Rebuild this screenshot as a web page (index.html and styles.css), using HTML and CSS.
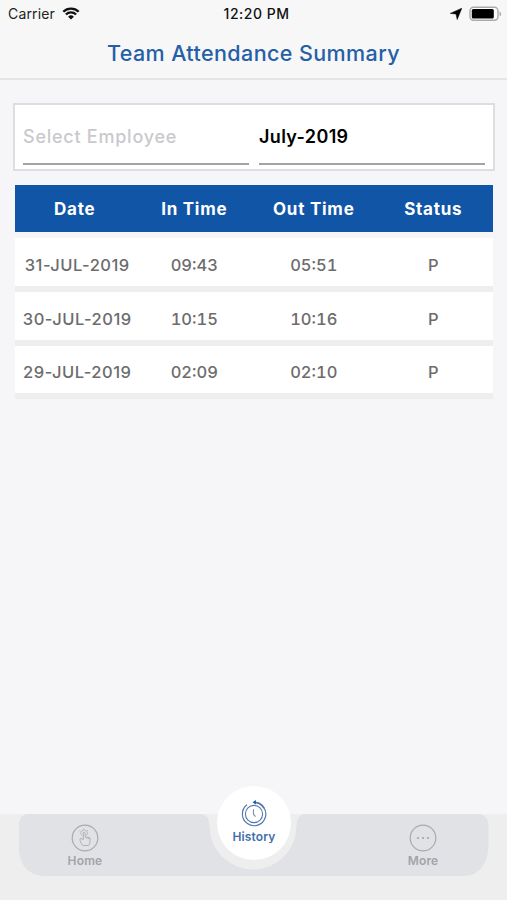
FILE: index.html
```html
<!DOCTYPE html>
<html lang="en">
<head>
    <meta charset="UTF-8">
    <meta name="viewport" content="width=device-width, initial-scale=1.0">
    <title>Team Attendance Summary</title>
    <link rel="stylesheet" href="styles.css">
</head>
<body>
    <header class="top-header">
        <div class="status-bar">
            <div class="status-left">
                <span class="carrier">Carrier</span>
                <svg class="wifi" width="18" height="13" viewBox="0 0 18 13">
                    <path d="M1.3 4.8a11 11 0 0 1 15.4 0M3.9 7.5a7.3 7.3 0 0 1 10.2 0" fill="none" stroke="#111" stroke-width="2.3"/>
                    <path d="M9 12.6 6.1 9.7a4.1 4.1 0 0 1 5.8 0z" fill="#111"/>
                </svg>
            </div>
            <span class="clock">12:20 PM</span>
            <div class="status-right">
                <svg width="12" height="12" viewBox="0 0 12 12">
                    <path d="M11.8.2 7.2 11.6 6 6 .2 5.4z" fill="#000" stroke="#000" stroke-width=".5"/>
                </svg>
                <svg width="33" height="16" viewBox="0 0 33 16">
                    <rect x="1" y="1.2" width="28" height="13" rx="3.6" fill="#fff" stroke="#a9a9a9" stroke-width="1.4"/>
                    <rect x="2.8" y="3" width="22" height="9.6" rx="1.5" fill="#000"/>
                    <path d="M30.6 5.5q1.6.6 1.6 2.4t-1.6 2.4z" fill="#a9a9a9"/>
                </svg>
            </div>
        </div>
        <h1 class="page-title">Team Attendance Summary</h1>
    </header>

    <main class="content">
        <!-- Filters -->
        <div class="filter-box">
            <div class="filter-field placeholder"><span>Select Employee</span></div>
            <div class="filter-field month"><span>July-2019</span></div>
        </div>

        <!-- Attendance list -->
        <div class="table">
            <div class="table-head">
                <span>Date</span>
                <span>In Time</span>
                <span>Out Time</span>
                <span>Status</span>
            </div>
            <div class="table-row">
                <span class="date">31-JUL-2019</span>
                <span>09:43</span>
                <span>05:51</span>
                <span>P</span>
            </div>
            <div class="table-row">
                <span class="date">30-JUL-2019</span>
                <span>10:15</span>
                <span>10:16</span>
                <span>P</span>
            </div>
            <div class="table-row">
                <span class="date">29-JUL-2019</span>
                <span>02:09</span>
                <span>02:10</span>
                <span>P</span>
            </div>
        </div>
    </main>

    <nav class="tab-bar">
        <div class="tabs">
            <svg class="tabs-shape" width="470" height="62" viewBox="0 0 470 62">
                <path d="M8 0H183Q190 1 190.5 12A43.5 43.5 0 0 0 277.5 12Q278 1 285 0H460Q469 1 469.5 12V34Q467 60 446 62H24Q2 60 0 36V10Q1 1 8 0z" fill="#e0e2e6"/>
            </svg>
            <a class="tab">
                <svg width="28" height="28" viewBox="0 0 28 28" fill="none" stroke="#a9abaf">
                    <circle cx="14" cy="14" r="12.8" stroke-width="1.2"/>
                    <path d="M12.3 15.5V9.2q0-1.2.9-1.2t.9 1.2v3.6l4 .7q1.2.2 1.1 1.5l-.3 3.3q-.2 2-1.5 3.2h-5.3q-1.5-1-2.2-2.8l-1-2.7q-.2-1.5 1.2-1.6l2.200 1.100M15.900 13.200v1.700M17.700 13.500v1.600" stroke-width=".9"/>
                    <path d="M10.8 11.5a3.3 3.3 0 1 1 4.8-.2M9.6 7.4l-1-1M12.5 5.7V4.6M16 7l1-1" stroke-width=".7"/>
                </svg>
                <span>Home</span>
            </a>
            <a class="tab tab-active">
                <svg width="28" height="28" viewBox="0 0 28 28" fill="none" stroke="#5379af">
                    <circle cx="14" cy="15" r="8.6" stroke-width="1.1"/>
                    <path d="M14 3.3a11.7 11.7 0 1 1-7 2.4" stroke-width="1.2"/>
                    <path d="M14 3.3a11.7 11.7 0 0 1 10 5.8" stroke-width="1.7"/>
                    <path d="m12.5 3.2 3.4-2.3v4.6z" fill="#285a9f" stroke="none"/>
                    <path d="M13.5 10.2v5l2 2.5" stroke="#7e8fa8" stroke-width="1.1"/>
                </svg>
                <span>History</span>
            </a>
            <a class="tab">
                <svg width="28" height="28" viewBox="0 0 28 28">
                    <circle cx="14" cy="14" r="12.8" fill="none" stroke="#a9abaf" stroke-width="1.2"/>
                    <g fill="#a3a5a9">
                        <circle cx="9" cy="14" r="1.1"/>
                        <circle cx="14" cy="14" r="1.1"/>
                        <circle cx="19" cy="14" r="1.1"/>
                    </g>
                </svg>
                <span>More</span>
            </a>
        </div>
    </nav>
</body>
</html>
```

FILE: styles.css
```css
* {
    box-sizing: border-box;
}

body {
    font-family: "Inter", "Liberation Sans", sans-serif;
    background-color: #f6f6f9;
    margin: 0;
    height: 100vh;
    display: flex;
    flex-direction: column;
    overflow: hidden;
}

/* Header */
.top-header {
    height: 80px;
    background-color: #f7f7f8;
    border-bottom: 2px solid #e5e5e7;
}

.status-bar {
    display: grid;
    grid-template-columns: 1fr auto 1fr;
    align-items: center;
    height: 27px;
    padding: 0 5px 0 8px;
    font-size: 14px;
    color: #222;
}

.status-left,
.status-right {
    display: flex;
    align-items: center;
    gap: 7px;
}

.status-right {
    justify-content: flex-end;
}

.carrier {
    letter-spacing: 0.15px;
}

.clock {
    margin-left: 3px;
    font-weight: 500;
    letter-spacing: 0.5px;
    color: #111;
}

.page-title {
    margin: 13px 0 0;
    font-size: 21.5px;
    line-height: 26px;
    font-weight: 500;
    letter-spacing: 0.4px;
    text-align: center;
    color: #2560a6;
}

/* Content */
.content {
    flex: 1;
    padding: 23px 12px 0 13px;
}

.filter-box {
    display: flex;
    gap: 10px;
    height: 68px;
    padding: 0 8px 4px 8px;
    border: 2px solid #dedee1;
    background: white;
}

.filter-field {
    flex: 1;
    padding-top: 20px;
    border-bottom: 2px solid #a3a3a3;
    font-size: 18px;
    line-height: 24px;
    font-weight: 600;
    color: #000;
}

.month {
    letter-spacing: 0.35px;
}

.placeholder {
    color: #c9c9cd;
    font-weight: 500;
    letter-spacing: 0.75px;
}

/* Table */
.table {
    margin: 14px 2px 0;
}

.table-head,
.table-row {
    display: grid;
    grid-template-columns: repeat(4, minmax(0, 1fr));
    align-items: center;
    text-align: center;
    font-size: 16.5px;
}

.table-head {
    height: 47px;
    background-color: #1155a6;
    color: white;
    font-size: 17px;
    font-weight: 700;
    letter-spacing: 0.75px;
}

.table-row {
    height: 53.8px;
    padding-top: 6px;
    background: white;
    border-bottom: 6px solid #eee;
    color: #6c6c6c;
    font-weight: 500;
    font-variant-numeric: tabular-nums;
}

.date {
    padding-left: 5px;
    white-space: nowrap;
    font-variant-numeric: normal;
    letter-spacing: 0.5px;
}

.table-head + .table-row {
    margin-top: 6px;
}

/* Bottom tabs */
.tab-bar {
    height: 86px;
    padding: 0 18px 0 19px;
    background-color: #eeeeef;
}

.tabs {
    position: relative;
    display: flex;
    justify-content: space-between;
    height: 62px;
    padding: 0 26px;
}

.tabs-shape {
    position: absolute;
    left: 0;
    top: 0;
}

.tab {
    position: relative;
    display: flex;
    flex-direction: column;
    align-items: center;
    width: 80px;
    padding-top: 10px;
    font-size: 12px;
    line-height: 16px;
    font-weight: 600;
    letter-spacing: 0.15px;
    color: #a2a4a8;
}

.tab span {
    margin-top: 1px;
}

.tab-active {
    width: 74px;
    height: 74px;
    margin-top: -28px;
    padding-top: 13px;
    border-radius: 50%;
    background: white;
    color: #416fab;
}

.tab-active span {
    margin-top: 2px;
}
```
